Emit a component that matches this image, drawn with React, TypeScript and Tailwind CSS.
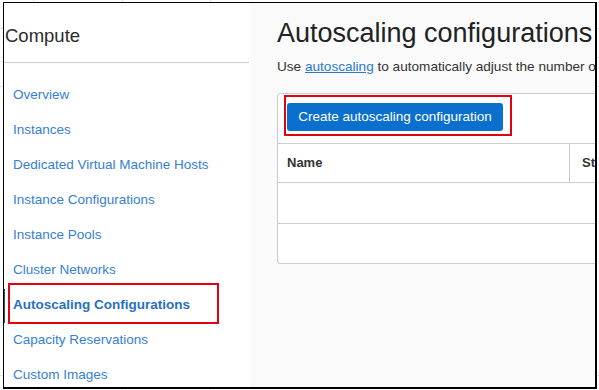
import React from "react";

const navItems = [
  "Overview",
  "Instances",
  "Dedicated Virtual Machine Hosts",
  "Instance Configurations",
  "Instance Pools",
  "Cluster Networks",
  "Autoscaling Configurations",
  "Capacity Reservations",
  "Custom Images",
];

export default function App() {
  return (
    <div
      className="relative w-[599px] h-[390px] overflow-hidden bg-white"
      style={{ fontFamily: '"Liberation Sans", Arial, sans-serif' }}
    >
      {/* faint spreadsheet grid behind the frame */}
      <div className="absolute left-[33px] top-0 h-[390px] w-px bg-[#e2e2e2]" />
      <div className="absolute left-[122px] top-0 h-[390px] w-px bg-[#e2e2e2]" />
      <div className="absolute left-[210px] top-0 h-[390px] w-px bg-[#e2e2e2]" />
      <div className="absolute left-0 top-[28px] h-px w-[599px] bg-[#e2e2e2]" />
      <div className="absolute left-0 top-[57px] h-px w-[599px] bg-[#e2e2e2]" />
      <div className="absolute left-0 top-[86px] h-px w-[599px] bg-[#e2e2e2]" />
      <div className="absolute left-0 top-[375px] h-px w-[599px] bg-[#e2e2e2]" />

      {/* framed screenshot */}
      <div className="absolute left-[3px] top-[2px] w-[594px] h-[387px] border-l border-t border-r-2 border-b-2 border-black bg-white flex overflow-hidden">
        {/* sidebar */}
        <div className="w-[246px] shrink-0 bg-white">
          <div className="mr-[1px] h-[60px] border-b border-[#c8cbcf] pl-[1px] pt-[21px]">
            <div className="text-[18.5px] leading-[24px] text-[#2b2b2b]">Compute</div>
          </div>
          <div className="flex flex-col pt-[13px]">
            {navItems.map((item) => {
              const active = item === "Autoscaling Configurations";
              return (
                <div key={item} className="relative h-[35px] pl-[9px] leading-[35px]">
                  {active && (
                    <>
                      <div className="absolute left-[-1px] top-[3px] h-[34px] w-[2px] bg-[#1b4f8a]" />
                      <div className="absolute left-[4px] top-[-3px] h-[41px] w-[211px] border-2 border-[#e3000f]" />
                    </>
                  )}
                  <span
                    className={
                      active
                        ? "text-[13.5px] font-bold text-[#2a6fbf]"
                        : "text-[13.5px] text-[#3580d3]"
                    }
                  >
                    {item}
                  </span>
                </div>
              );
            })}
          </div>
        </div>

        {/* main */}
        <div className="flex flex-1 flex-col bg-[#fafafa] pl-[27px] pt-[14px] overflow-hidden">
          <div className="whitespace-nowrap text-[27px] leading-[32px] text-[#222]">
            Autoscaling configurations
          </div>
          <div className="mt-[10px] whitespace-nowrap text-[13.6px] leading-[16px] text-[#333]">
            Use <span className="text-[#2a7ad0] underline">autoscaling</span> to automatically adjust the number of instances
          </div>
          <div className="relative mt-[18px] w-[420px] shrink-0 rounded-[3px] border border-[#c8cbcf] bg-white">
            <div className="flex h-[49px] items-start pl-[9px] pt-[9px]">
              <div className="flex h-[28px] w-[216px] items-center justify-center rounded-[3px] bg-[#0b6fce] text-[13.5px] text-white">
                Create autoscaling configuration
              </div>
            </div>
            <div className="absolute left-[6px] top-[1px] h-[41px] w-[228px] border-2 border-[#e3000f]" />
            <div className="flex h-[40px] border-t border-b border-[#c8cbcf]">
              <div className="flex w-[292px] items-center border-r border-[#c8cbcf] pl-[9px] text-[13px] font-bold text-[#333]">
                Name
              </div>
              <div className="flex items-center pl-[12px] text-[13px] font-bold text-[#333]">State</div>
            </div>
            <div className="h-[41px] border-b border-[#c8cbcf]" />
            <div className="h-[39px]" />
          </div>
        </div>
      </div>
    </div>
  );
}
